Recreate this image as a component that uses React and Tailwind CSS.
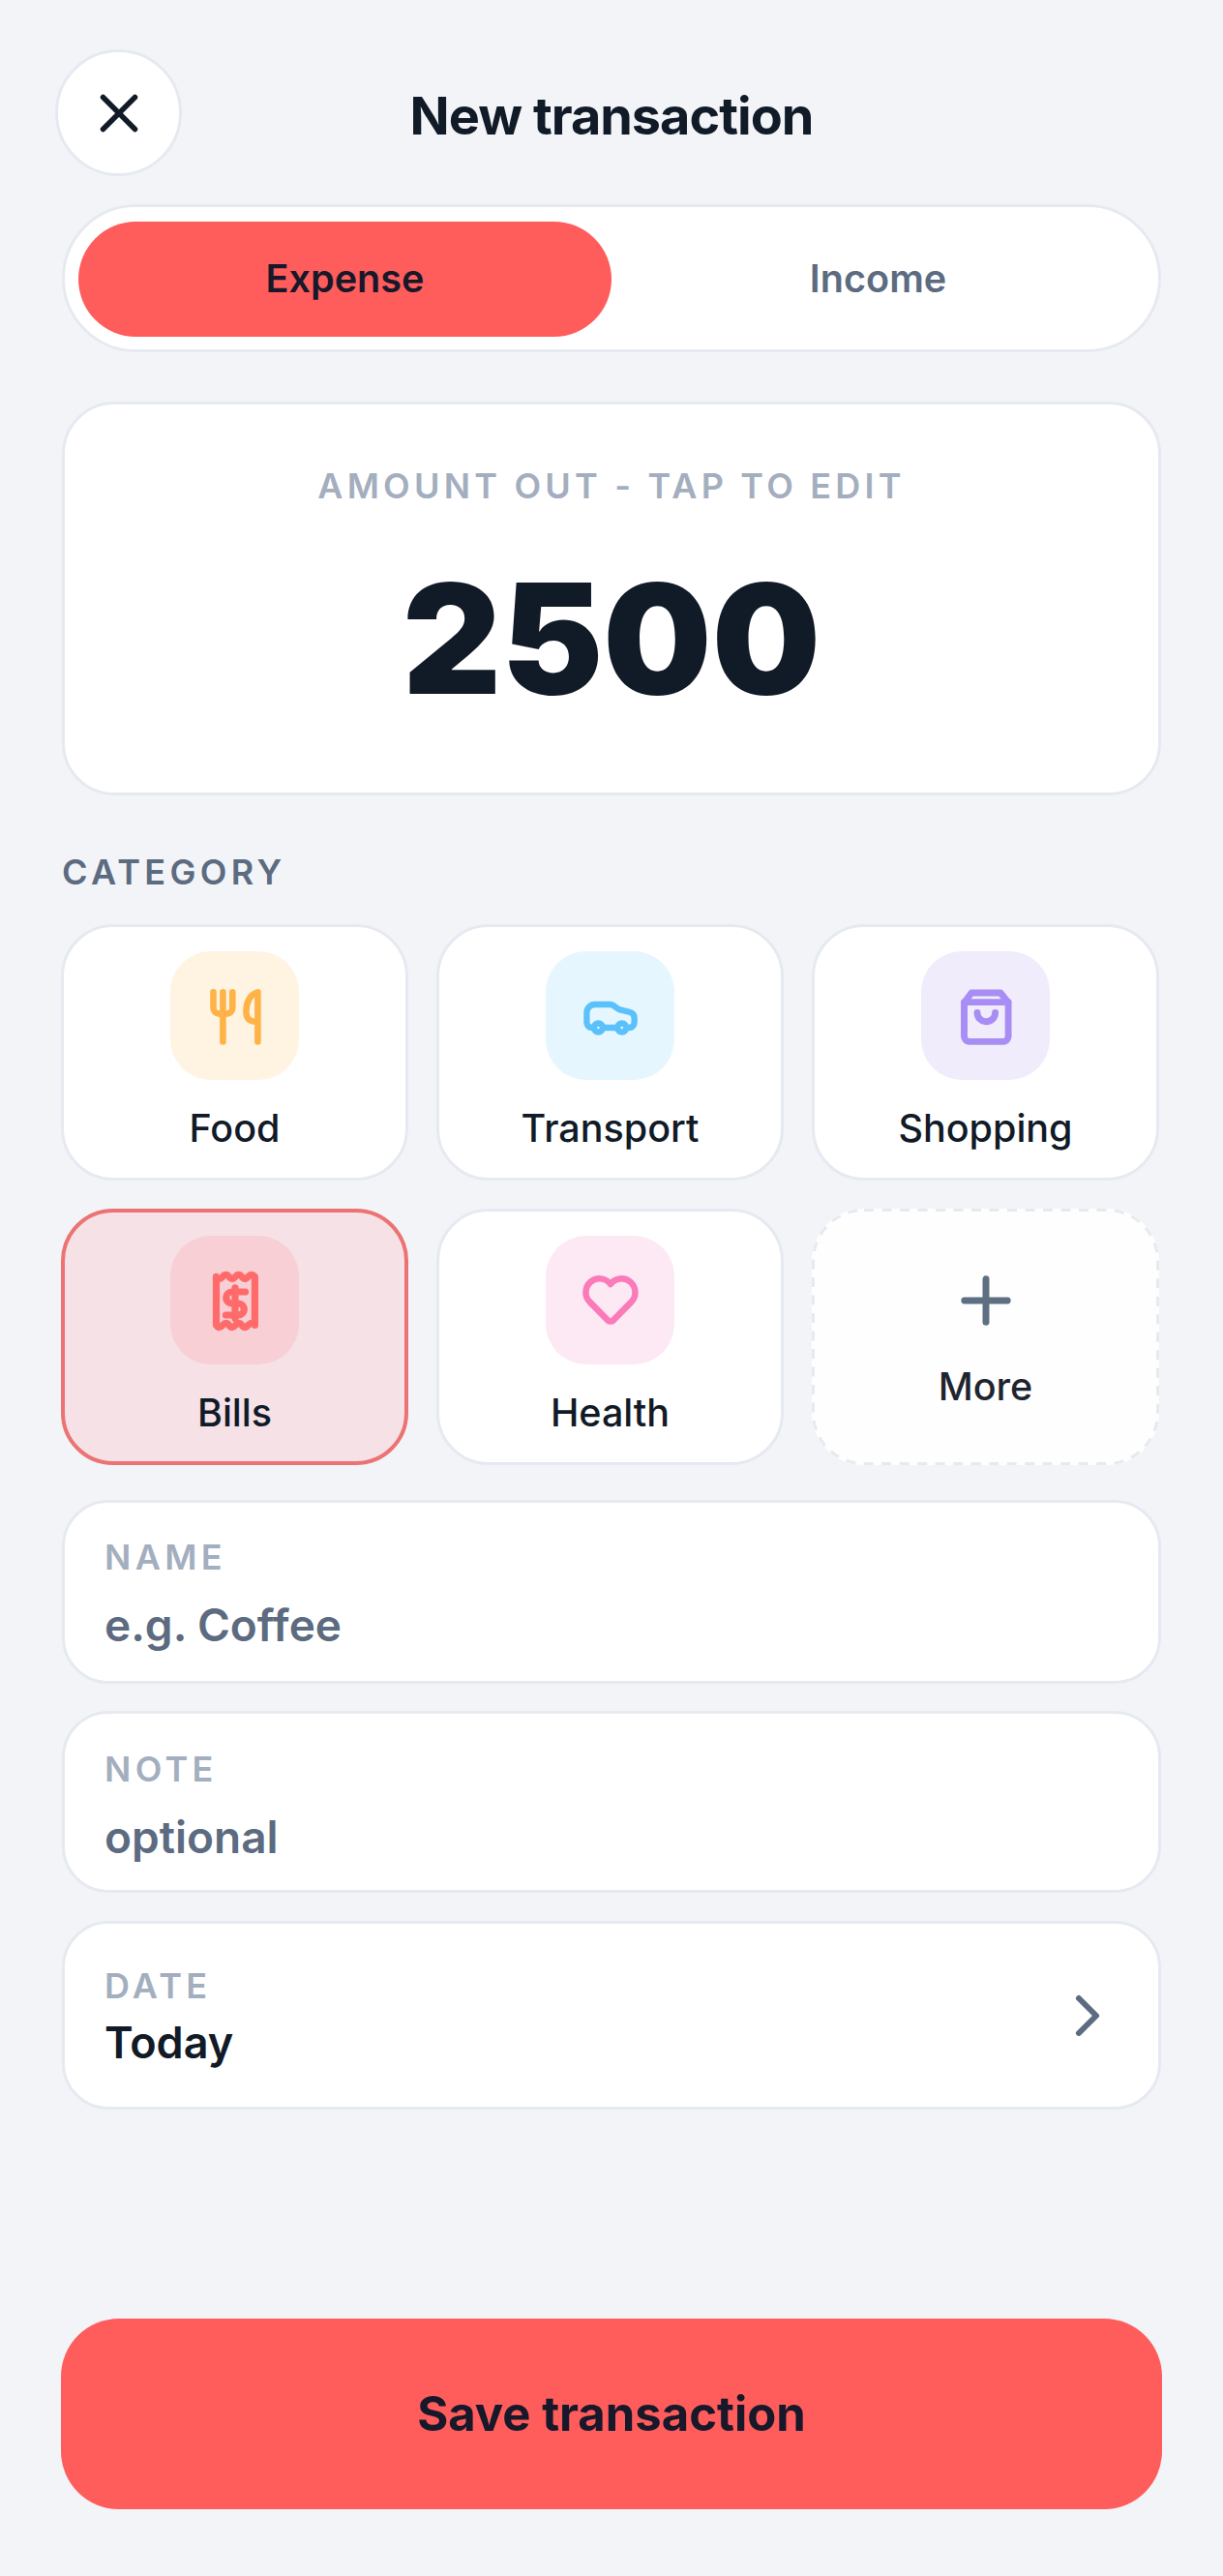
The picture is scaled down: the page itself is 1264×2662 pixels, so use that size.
import { X, Plus, ChevronRight } from 'lucide-react';

function IconBase({ className, strokeWidth, children }) {
    return (
        <svg viewBox="0 0 24 24" fill="none" stroke="currentColor" strokeWidth={strokeWidth} strokeLinecap="round" strokeLinejoin="round" className={className}>
            {children}
        </svg>
    );
}

const FoodIcon = ({ className }) => (
    <IconBase className={className} strokeWidth="2.2">
        <path d="M4.5 3.8v5.4a2 2 0 0 0 2 2h2.6a2 2 0 0 0 2-2V3.8" />
        <path d="M7.8 3.8v17" />
        <path d="M19.8 20.8V3.8c-2.6.6-4 3.4-4 6.6 0 2.6 1.2 3.6 4 3.6" />
    </IconBase>
);

const CarIcon = ({ className }) => (
    <IconBase className={className} strokeWidth="2.1">
        <circle cx="7.8" cy="16" r="1.5" />
        <circle cx="15.9" cy="16" r="1.5" />
        <path d="M6.2 16h-.6a1.8 1.8 0 0 1-1.8-1.8V10.8A2.8 2.8 0 0 1 6.6 8H12c1.2 0 1.7 1.3 3.2 1.8l3.2.8c1.2.3 1.8 1 1.8 2v1.6a1.8 1.8 0 0 1-1.8 1.8h-.9" />
        <path d="M9.4 16h4.9" />
    </IconBase>
);

const BagIcon = ({ className }) => (
    <IconBase className={className} strokeWidth="2.3">
        <path d="M7 4h10l2.7 3.4V19a1.8 1.8 0 0 1-1.8 1.8H6.3A1.8 1.8 0 0 1 4.5 19V7.4Z" />
        <path d="M4.5 7.2h15.2" />
        <path d="M9 10.8a3.1 3.1 0 0 0 6.2 0" />
    </IconBase>
);

const ReceiptIcon = ({ className }) => (
    <IconBase className={className} strokeWidth="2.4">
        <path d="M5.5 3.8q1.1 1.4 2.2 0t2.2 0 2.2 0 2.2 0 2.2 0 2.3 0V20.5q-1.1-1.4-2.3 0t-2.2 0-2.2 0-2.2 0-2.2 0-2.2 0Z" />
        <path d="M15.5 9h-4.6a2 2 0 0 0 0 4h2.2a2 2 0 0 1 0 4H8.8" />
        <path d="M12 7.6V18.2" />
    </IconBase>
);

const HeartIcon = ({ className }) => (
    <IconBase className={className} strokeWidth="2.3">
        <path d="M19.5 12.572l-6.5 6.628a1.4 1.4 0 0 1-2 0l-6.5-6.628a5 5 0 1 1 7.5-6.566a5 5 0 1 1 7.5 6.572" />
    </IconBase>
);

const categories = [
    { name: 'Food', Icon: FoodIcon, tile: 'bg-[#fff3e2]', icon: 'h-[72px] w-[72px] text-[#ffb347]' },
    { name: 'Transport', Icon: CarIcon, tile: 'bg-[#e5f6fe]', icon: 'h-[72px] w-[72px] text-[#5ac1fb]' },
    { name: 'Shopping', Icon: BagIcon, tile: 'bg-[#f1ecfc]', icon: 'h-[72px] w-[72px] text-[#a88df4]' },
    { name: 'Bills', Icon: ReceiptIcon, tile: 'bg-[#f7cfd5]', icon: 'h-[72px] w-[72px] text-[#ff6b6b]', active: true },
    { name: 'Health', Icon: HeartIcon, tile: 'bg-[#fde9f3]', icon: 'h-[68px] w-[68px] text-[#fb7ab9]' },
];

function Field({ label, value, className }) {
    return (
        <div className={`rounded-[48px] border-[3px] border-[#e6eaf0] bg-white pl-[41px] ${className}`}>
            <div className="text-[36px] leading-[54px] font-semibold tracking-[4.3px] text-[#a3aebf]">{label}</div>
            <div className="mt-[13px] text-[46px] leading-[60px] font-semibold text-[#5c6b80]">{value}</div>
        </div>
    );
}

export default function App() {
    return (
        <div className="min-h-[2662px] bg-[#f2f4f8] px-[64px] pt-[51px] font-['Inter',sans-serif] text-[#111a27]">
            <div className="-mx-[7px] grid h-[131px] grid-cols-[131px_1fr_131px] items-center">
                <button className="flex h-[131px] w-[131px] items-center justify-center rounded-full border-[3px] border-[#e6eaf0] bg-white">
                    <X className="h-[66px] w-[66px] text-[#111a27]" strokeWidth={2} />
                </button>
                <h1 className="pt-[6px] text-center text-[54px] leading-[72px] font-bold tracking-[-1px]">New transaction</h1>
            </div>

            <div className="mt-[29px] grid h-[153px] grid-cols-2 rounded-full border-[3px] border-[#e6eaf0] bg-white px-[14px] pt-[15px] pb-[13px] text-[39.6px] font-semibold">
                <button className="rounded-full bg-[#ff5c5c] text-[#17182a]">Expense</button>
                <button className="rounded-full text-[#5c6b80]">Income</button>
            </div>

            <div className="mt-[51px] flex h-[407px] flex-col items-center rounded-[54px] border-[3px] border-[#e6eaf0] bg-white pt-[57px]">
                <div className="text-[36px] leading-[54px] font-semibold tracking-[4.2px] text-[#a3aebf]">AMOUNT OUT - TAP TO EDIT</div>
                <div className="mt-[46px] text-[158px] leading-[170px] font-black text-[#111a27]">2500</div>
            </div>

            <div className="mt-[52px] text-[36px] leading-[54px] font-semibold tracking-[4.3px] text-[#5c6b80]">CATEGORY</div>

            <div className="mt-[27px] mr-[2px] -ml-[1px] grid grid-cols-3 gap-[29px]">
                {categories.map(({ name, Icon, tile, icon, active }) => (
                    <div
                        key={name}
                        className={`flex h-[265px] flex-col items-center rounded-[54px] ${active ? 'border-[4px] border-[#ec7373] bg-[#f5e1e6] pt-[24px]' : 'border-[3px] border-[#e6eaf0] bg-white pt-[25px]'}`}
                    >
                        <div className={`flex h-[133px] w-[133px] items-center justify-center rounded-[42px] ${tile}`}>
                            <Icon className={icon} />
                        </div>
                        <div className="mt-[23px] text-[39.5px] leading-[54px] font-medium text-[#111a27]">{name}</div>
                    </div>
                ))}
                <div className="relative flex h-[265px] flex-col items-center justify-center rounded-[54px] bg-[#fefefe] pt-[2px]">
                    <svg className="absolute inset-0 h-full w-full" fill="none">
                        <rect x="1.5" y="1.5" width="356" height="262" rx="52.5" stroke="#e6eaf0" strokeWidth="3" strokeDasharray="10 8.5" />
                    </svg>
                    <Plus className="h-[76px] w-[76px] text-[#5f6f82]" strokeWidth={2.2} />
                    <div className="mt-[24px] text-[39.5px] leading-[54px] font-medium text-[#1e2530]">More</div>
                </div>
            </div>

            <div className="mt-[36px] flex flex-col">
                <Field label="NAME" value="e.g. Coffee" className="h-[190px] pt-[29px]" />
                <Field label="NOTE" value="optional" className="mt-[28px] h-[188px] pt-[30px]" />
                <div className="mt-[29px] flex h-[195px] items-center justify-between rounded-[48px] border-[3px] border-[#e6eaf0] bg-white pr-[37px] pl-[41px]">
                    <div>
                        <div className="text-[36px] leading-[54px] font-semibold tracking-[4.3px] text-[#a3aebf]">DATE</div>
                        <div className="pt-[2px] text-[45px] leading-[60px] font-semibold text-[#111a27]">Today</div>
                    </div>
                    <ChevronRight className="h-[72px] w-[72px] text-[#5c6b80]" strokeWidth={2} />
                </div>
            </div>

            <button className="-mx-[1px] mt-[216px] block h-[197px] w-[1138px] rounded-[60px] bg-[#ff5c5c] text-[49px] font-bold text-[#17182a]">
                Save transaction
            </button>
        </div>
    );
}
